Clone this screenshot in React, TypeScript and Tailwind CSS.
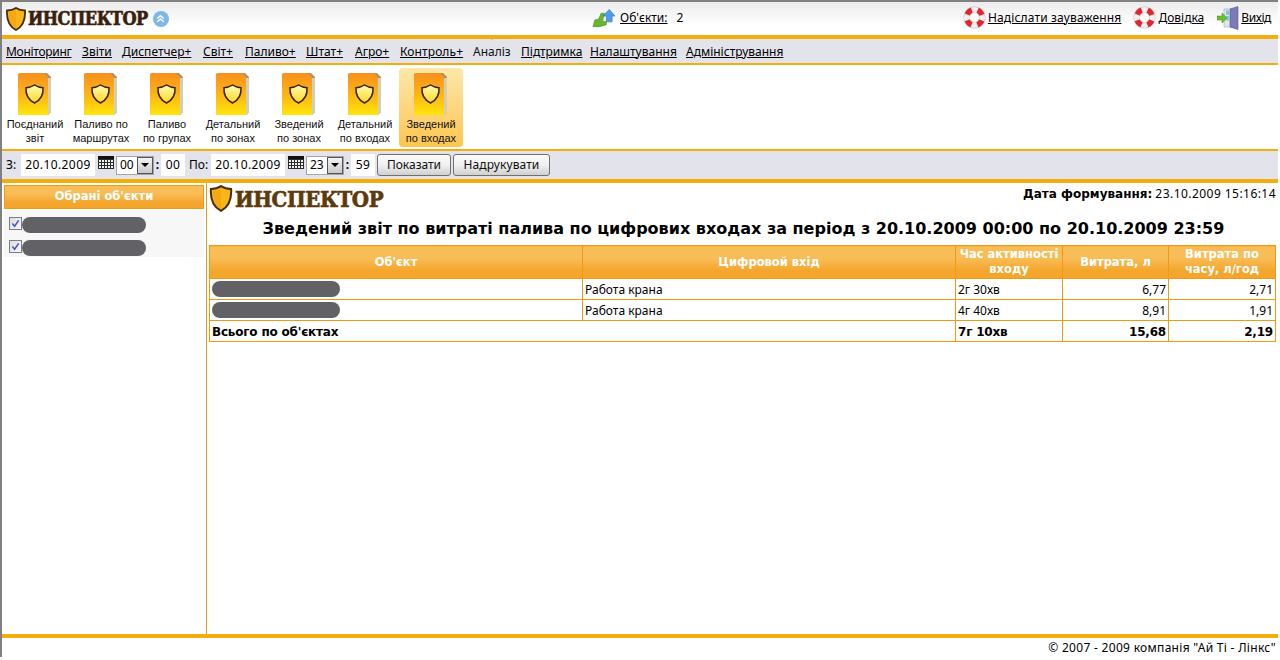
import React from "react";

const Shield = ({ className = "" }: { className?: string }) => (
  <svg viewBox="0 0 20 24" className={className}>
    <path d="M10 1 C13 3 16 3.5 19 3.5 C19.5 12 17.5 19 10 23 C2.5 19 .5 12 1 3.5 C4 3.5 7 3 10 1Z" fill="#f9b618" stroke="#4a2a0c" strokeWidth="1.8" />
    <path d="M3 5 C6 5 8 4.2 10 3 L10 21 C4 18 2.6 12 3 5Z" fill="#f5a810" />
  </svg>
);

const Logo = ({ color, w = false }: { color: string; w?: boolean }) => (
  <div className="flex items-center">
    <Shield className={w ? "w-[24px] h-[27px]" : "w-[20px] h-[24px]"} />
    <span
      className={`font-['DejaVu_Serif',serif] font-bold [font-stretch:condensed] ml-[2px] [-webkit-text-stroke:0.6px_currentColor] ${w ? "text-[22px] leading-[26px] tracking-[-0.4px]" : "text-[18px] leading-[22px] tracking-[-0.5px]"}`}
      style={{ color }}
    >
      ИНСПЕКТОР
    </span>
  </div>
);

const Folder = () => (
  <svg viewBox="0 0 34 44" className="w-[34px] h-[44px]">
    <defs>
      <linearGradient id="fg" x1="0" y1="0" x2="0" y2="1">
        <stop offset="0" stopColor="#f78f1e" />
        <stop offset="0.55" stopColor="#fdb813" />
        <stop offset="1" stopColor="#ffe50c" />
      </linearGradient>
      <linearGradient id="sh" x1="0" y1="0" x2="0" y2="1">
        <stop offset="0" stopColor="#fffbb8" />
        <stop offset="1" stopColor="#ffd81a" />
      </linearGradient>
    </defs>
    <path d="M3 1 H29 L33 5 V40 L30 43 H27 V4 H3Z" fill="#a8946c" />
    <path d="M30 6 H33 V40 L30 43Z" fill="#d6cdb6" />
    <path d="M0 2 Q0 1 3 1 H26 L30 5 V43 H0Z" fill="url(#fg)" />
    <path d="M16.5 13 C19.5 15 22 15.6 25 15.7 C25.5 22 23.5 27.5 16.5 31 C9.5 27.5 7.5 22 8 15.7 C11 15.6 13.5 15 16.5 13Z" fill="url(#sh)" stroke="#3a2208" strokeWidth="1.5" />
  </svg>
);

const Lifebuoy = () => (
  <svg viewBox="0 0 24 24" className="w-[23px] h-[23px] shrink-0">
    <circle cx="12" cy="12" r="11.4" fill="#bdbdbd" />
    <circle cx="12" cy="12" r="11" fill="#f1f1f1" />
    <circle cx="12" cy="12" r="8" fill="none" stroke="#e8232a" strokeWidth="6" strokeDasharray="6.5 6.07" strokeDashoffset="-3" />
    <circle cx="12" cy="12" r="5" fill="#fff" stroke="#c8c8c8" strokeWidth="0.6" />
  </svg>
);

const Door = () => (
  <svg viewBox="0 0 22 24" className="w-[22px] h-[24px] shrink-0">
    <path d="M7 3 H14 V21 H7Z" fill="#dfe6ee" stroke="#9aa" strokeWidth="0.6" />
    <path d="M13 3 L21 0.5 V23.5 L13 21Z" fill="#7b7bb8" stroke="#55558c" strokeWidth="0.6" />
    <path d="M9 4.5 H12 V9 H9Z M9 10 H12 V14.5 H9Z" fill="#7cc6e8" />
    <path d="M0 10 H5 V7 L10 12 L5 17 V14 H0Z" fill="#6cc02c" stroke="#3f8f12" strokeWidth="0.5" />
  </svg>
);

const Objects = () => (
  <svg viewBox="0 0 24 20" className="w-[23px] h-[20px] shrink-0">
    <path d="M1 19 L3 12 L7 11 L9.5 5 L13 5 L11 13 L15 14 L15 17 L8 19Z" fill="#69b72e" stroke="#3f8a16" strokeWidth="0.6" />
    <path d="M18 1 L24 8 H21 V14 H15 V8 H11.5Z" fill="#4f9ce8" stroke="#2a6cb8" strokeWidth="0.6" />
  </svg>
);

const Calendar = () => (
  <svg viewBox="0 0 16 13" className="w-[16px] h-[13px] shrink-0 -mt-[5px]">
    <rect width="16" height="13" fill="#2b2b2b" />
    <rect y="0" width="16" height="3" fill="#111" />
    {[4, 7, 10].map((y) =>
      [1, 4, 7, 10, 13].map((x) => <rect key={`${x}-${y}`} x={x} y={y} width="2" height="2" fill="#f2f2f2" />)
    )}
  </svg>
);

const Field = ({ v, w }: { v: string; w: string }) => (
  <div className={`bg-white h-[22px] flex items-center justify-center text-[12px] text-black tracking-[0.4px] ${w}`}>{v}</div>
);

const Sel = ({ v }: { v: string }) => (
  <div className="w-[38px] h-[19px] border border-[#a5a5a5] bg-white flex items-center justify-between text-[12px] text-black">
    <span className="pl-[3px]">{v}</span>
    <span className="w-[16px] h-[17px] border border-[#555] bg-gradient-to-b from-[#f4f4f4] to-[#c9c9c9] flex items-center justify-center">
      <span className="w-0 h-0 border-x-[4px] border-x-transparent border-t-[4px] border-t-black" />
    </span>
  </div>
);

const Btn = ({ t, w }: { t: string; w: string }) => (
  <button className={`h-[22px] rounded-[3px] border border-[#707070] bg-gradient-to-b from-[#fbfbfb] via-[#f0f0f0] to-[#d0d0d0] text-[12px] text-[#111] leading-none ${w}`}>{t}</button>
);

const Pill = ({ w }: { w: string }) => <div className={`h-[16px] rounded-full bg-[#626166] ${w}`} />;

const Check = () => (
  <span className="w-[13px] h-[13px] border border-[#7d7d86] bg-gradient-to-br from-[#dcdce4] to-[#f8f8fb] flex items-center justify-center shrink-0">
    <svg viewBox="0 0 10 10" className="w-[9px] h-[9px]">
      <path d="M1.5 5 L4 8 L8.5 1.5" fill="none" stroke="#3a52c4" strokeWidth="1.6" />
    </svg>
  </span>
);

const menu: [string, string][] = [
  ["Моніторинг", "w-[76px] tracking-[-0.3px]"],
  ["Звіти", "w-[40px]"],
  ["Диспетчер+", "w-[81px]"],
  ["Світ+", "w-[42px]"],
  ["Паливо+", "w-[61px]"],
  ["Штат+", "w-[49px]"],
  ["Агро+", "w-[45px]"],
  ["Контроль+", "w-[73px] tracking-[0.1px]"],
  ["Аналіз", "w-[48px]"],
  ["Підтримка", "w-[69px]"],
  ["Налаштування", "w-[96px]"],
  ["Адміністрування", "w-[100px]"],
];
const reports = [["Поєднаний", "звіт"], ["Паливо по", "маршрутах"], ["Паливо", "по групах"], ["Детальний", "по зонах"], ["Зведений", "по зонах"], ["Детальний", "по входах"], ["Зведений", "по входах"]];

const head = "bg-gradient-to-b from-[#f9bd57] from-35% to-[#f4a62c] to-75%";
const th = `border border-[#ee9a12] ${head} text-white font-['DejaVu_Sans',sans-serif] font-bold text-[11.5px] leading-[15px] text-center align-middle p-0`;
const td = "border border-[#ee9a12] px-[2px] pt-[1px] pb-0 h-[21px] align-middle text-[12px] text-black";
const tb = `${td} font-['DejaVu_Sans',sans-serif] font-bold text-[11px] tracking-[-0.2px]`;
const tp = "border border-[#ee9a12] px-[2px] py-0 h-[21px] align-middle";

export default function App() {
  return (
    <div className="w-[1278px] h-[657px] border-t-2 border-l-2 border-[#808080] flex flex-col bg-white font-['Noto_Sans','Liberation_Sans',sans-serif] text-[12px] text-black overflow-hidden">
      <header className="h-[33px] shrink-0 bg-gradient-to-b from-[#ececec] to-white to-70% flex items-center pl-[4px] pr-[7px]">
        <div className="w-[586px] flex items-center">
          <Logo color="#3a1f0c" />
          <span className="ml-[5px] w-[16px] h-[16px] rounded-full bg-[#7fb8e8] flex items-center justify-center">
            <svg viewBox="0 0 12 12" className="w-[11px] h-[11px]">
              <path d="M2.5 6 L6 3 L9.5 6 M2.5 9.5 L6 6.5 L9.5 9.5" fill="none" stroke="#fff" strokeWidth="1.5" />
            </svg>
          </span>
        </div>
        <div className="flex items-center flex-1 -mt-[2px]">
          <Objects />
          <a className="underline ml-[5px]">Об'єкти:</a>
          <span className="ml-[9px]">2</span>
        </div>
        <div className="flex items-center -mt-[2px]">
          <Lifebuoy />
          <a className="underline ml-[2px] tracking-[0.15px]">Надіслати зауваження</a>
          <span className="w-[12px]" />
          <Lifebuoy />
          <a className="underline ml-[2px]">Довідка</a>
          <span className="w-[13px]" />
          <Door />
          <a className="underline ml-[2px] tracking-[-0.4px]">Вихід</a>
        </div>
      </header>
      <div className="h-[4px] shrink-0 bg-[#f4ae0c]" />
      <nav className="h-[24px] shrink-0 bg-[#e3e3ec] flex items-center pl-[4px] pt-[1px]">
        {menu.map(([m, c]) => (
          <span key={m} className={`shrink-0 ${c}`}>
            <a className={m === "Аналіз" ? "relative text-[#111]" : "underline"}>
              {m}
              {m === "Аналіз" && (
                <span className="absolute left-[14px] -top-[8px] w-0 h-0 border-x-[5px] border-x-transparent border-t-[5px] border-t-[#f4ae0c]" />
              )}
            </a>
          </span>
        ))}
      </nav>
      <div className="h-[2px] shrink-0 bg-[#f4ae0c]" />
      <section className="h-[84px] shrink-0 flex gap-[2px] pl-[1px] pt-[3px] font-['Liberation_Sans',sans-serif]">
        {reports.map((r, i) => (
          <div key={i} className={`w-[64px] h-[79px] flex flex-col items-center pt-[4px] rounded-[4px] text-[11px] leading-[14px] text-center text-[#111] ${i === 6 ? "bg-gradient-to-b from-[#fde7a8] to-[#fdc54e]" : ""}`}>
            <Folder />
            <span className="mt-[1px]">{r[0]}</span>
            <span>{r[1]}</span>
          </div>
        ))}
      </section>
      <div className="h-[2px] shrink-0 bg-[#f4ae0c]" />
      <div className="h-[28px] shrink-0 bg-[#e3e3ec] flex items-center pl-[4px]">
        <span className="w-[15px]">З:</span>
        <Field v="20.10.2009" w="w-[74px]" />
        <span className="w-[3px]" />
        <Calendar />
        <span className="w-[2px]" />
        <Sel v="00" />
        <span className="w-[7px] text-center font-bold">:</span>
        <Field v="00" w="w-[24px]" />
        <span className="w-[26px] pl-[4px]">По:</span>
        <Field v="20.10.2009" w="w-[74px]" />
        <span className="w-[3px]" />
        <Calendar />
        <span className="w-[2px]" />
        <Sel v="23" />
        <span className="w-[7px] text-center font-bold">:</span>
        <Field v="59" w="w-[24px]" />
        <span className="w-[2px]" />
        <Btn t="Показати" w="w-[74px]" />
        <span className="w-[2px]" />
        <Btn t="Надрукувати" w="w-[97px] tracking-[0.1px]" />
      </div>
      <div className="h-[4px] shrink-0 bg-[#f4ae0c]" />
      <main className="flex-1 flex min-h-0">
        <aside className="w-[205px] shrink-0 border-r border-[#ee9a12] pl-[2px] pr-[2px] pt-[2px]">
          <div className={`h-[24px] border border-[#ee9a12] ${head} text-white font-['DejaVu_Sans',sans-serif] font-bold text-[11.5px] flex items-center justify-center`}>
            Обрані об'єкти
          </div>
          <div className="mt-[2px] h-[46px] bg-[#f7f7f7] flex flex-col gap-[7px] pt-[6px] pl-[5px]">
            <div className="flex items-start"><Check /><Pill w="w-[124px]" /></div>
            <div className="flex items-start"><Check /><Pill w="w-[124px]" /></div>
          </div>
        </aside>
        <div className="flex-1 min-w-0 pl-[2px]">
          <div className="flex justify-between items-start h-[34px] pt-[2px] pr-[2px]">
            <Logo color="#5d3a0a" w />
            <div className="text-[12px]"><b className="font-['DejaVu_Sans',sans-serif] text-[12px]">Дата формування:</b> <span className="tracking-[0.45px]">23.10.2009 15:16:14</span></div>
          </div>
          <h1 className="font-['DejaVu_Sans',sans-serif] font-bold text-[16px] leading-[24px] text-center h-[28px] text-black">
            Зведений звіт по витраті палива по цифрових входах за період з 20.10.2009 00:00 по 20.10.2009 23:59
          </h1>
          <table className="w-[1066px] border-collapse table-fixed">
            <colgroup>
              <col className="w-[373px]" /><col className="w-[373px]" /><col className="w-[107px]" /><col className="w-[106px]" /><col className="w-[107px]" />
            </colgroup>
            <thead>
              <tr className="h-[33px]">
                <th className={th}>Об'єкт</th>
                <th className={th}>Цифровой вхід</th>
                <th className={th}>Час активності входу</th>
                <th className={th}>Витрата, л</th>
                <th className={th}>Витрата по часу, л/год</th>
              </tr>
            </thead>
            <tbody>
              <tr>
                <td className={tp}><Pill w="w-[128px]" /></td>
                <td className={td}>Работа крана</td>
                <td className={td}>2г 30хв</td>
                <td className={`${td} text-right`}>6,77</td>
                <td className={`${td} text-right`}>2,71</td>
              </tr>
              <tr>
                <td className={tp}><Pill w="w-[128px]" /></td>
                <td className={td}>Работа крана</td>
                <td className={td}>4г 40хв</td>
                <td className={`${td} text-right`}>8,91</td>
                <td className={`${td} text-right`}>1,91</td>
              </tr>
              <tr>
                <td className={tb} colSpan={2}>Всього по об'єктах</td>
                <td className={tb}>7г 10хв</td>
                <td className={`${tb} text-right`}>15,68</td>
                <td className={`${tb} text-right`}>2,19</td>
              </tr>
            </tbody>
          </table>
        </div>
      </main>
      <div className="h-[4px] shrink-0 bg-[#f4ae0c]" />
      <footer className="h-[19px] shrink-0 flex items-center justify-end pr-[2px] pt-[1px] text-[12px] tracking-[0.3px]">© 2007 - 2009 компанія "Ай Ті - Лінкс"</footer>
    </div>
  );
}
